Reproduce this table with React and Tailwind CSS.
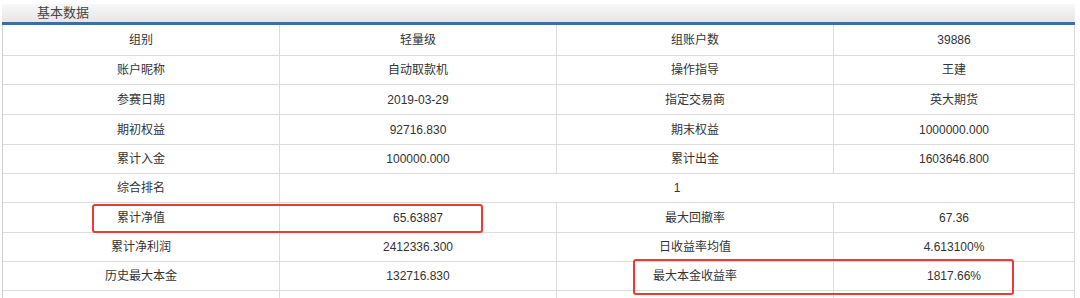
import React from 'react';

const rows = [
  { h: 'h-[31px]', cells: ['组别', '轻量级', '组账户数', '39886'] },
  { h: 'h-[29px]', cells: ['账户昵称', '自动取款机', '操作指导', '王建'] },
  { h: 'h-[30px]', cells: ['参赛日期', '2019-03-29', '指定交易商', '英大期货'] },
  { h: 'h-[30px]', cells: ['期初权益', '92716.830', '期末权益', '1000000.000'] },
  { h: 'h-[29px]', cells: ['累计入金', '100000.000', '累计出金', '1603646.800'] },
  { h: 'h-[29px]', cells: ['综合排名', '1'], span: true },
  { h: 'h-[30px]', cells: ['累计净值', '65.63887', '最大回撤率', '67.36'] },
  { h: 'h-[29px]', cells: ['累计净利润', '2412336.300', '日收益率均值', '4.613100%'] },
  { h: 'h-[29px]', cells: ['历史最大本金', '132716.830', '最大本金收益率', '1817.66%'] },
  { h: 'h-[29px]', cells: ['', '', '', ''] },
];

export default function App() {
  return (
    <div
      className="relative w-[1080px] h-[298px] overflow-hidden bg-white text-[12px] text-[#333]"
      style={{ fontFamily: '"Liberation Sans", "Noto Sans CJK SC", sans-serif' }}
    >
      <div className="pt-[4px] pl-[2px] w-[1075px]">
        {/* header band */}
        <div className="h-[21px] bg-gradient-to-b from-[#f8f8f8] to-[#e6e6e6] border-b-[3px] border-[#3b6ea5] flex items-center pl-[35px]">
          <span className="text-[13px] text-[#444] leading-none pb-[2px]">基本数据</span>
        </div>

        {/* table */}
        <div className="border-l border-[#cfcfcf]">
          {rows.map((row, i) => (
            <div key={i} className={`${row.h} grid grid-cols-[277px_277px_277px_241px] border-b border-[#dcdcdc]`}>
              {row.span ? (
                <>
                  <div className="flex items-center justify-center border-r border-[#dcdcdc]">{row.cells[0]}</div>
                  <div className="col-span-3 flex items-center justify-center border-r border-[#dcdcdc]">{row.cells[1]}</div>
                </>
              ) : (
                row.cells.map((c, j) => (
                  <div key={j} className="flex items-center justify-center border-r border-[#dcdcdc]">{c}</div>
                ))
              )}
            </div>
          ))}
        </div>
      </div>

      {/* red highlight boxes */}
      <div className="absolute left-[92px] top-[204px] w-[391px] h-[29px] border-2 border-[#ec3b35] rounded-[3px]" />
      <div className="absolute left-[633px] top-[259px] w-[381px] h-[36px] border-2 border-[#ec3b35] rounded-[3px]" />
    </div>
  );
}
